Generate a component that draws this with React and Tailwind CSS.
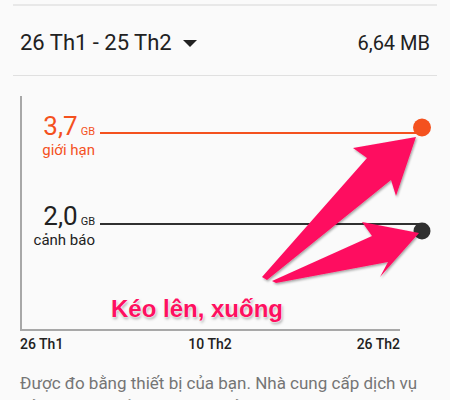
import React from 'react';

const ROBOTO = { fontFamily: 'Roboto, "Noto Sans", sans-serif' };

const Arrows = () => (
  <svg
    className="absolute inset-0 pointer-events-none"
    width="450"
    height="400"
    viewBox="0 0 450 400"
  >
    <defs>
      <filter id="shadow" x="-20%" y="-20%" width="140%" height="140%">
        <feDropShadow dx="1" dy="1.5" stdDeviation="1" floodColor="#000" floodOpacity="0.35" />
      </filter>
    </defs>

    {/* limit line + handle */}
    <line x1="100" y1="133" x2="422" y2="133" stroke="#f4511e" strokeWidth="2" />
    <circle cx="422" cy="127.5" r="9" fill="#f4511e" />

    {/* warning line + handle */}
    <line x1="100" y1="224" x2="420" y2="224" stroke="#303030" strokeWidth="2" />
    <circle cx="422" cy="231" r="8.5" fill="#303030" />

    {/* pink callout arrows */}
    <g fill="#fe1060" filter="url(#shadow)">
      <polygon points="262,277 367,158 353,148 416,137 396,196 391,180 267,280" />
      <polygon points="272,281 372,236 362,222 419,233 380,277 388,262 276,283" />
    </g>
  </svg>
);

export default function App() {
  return (
    <div className="relative w-[450px] h-[400px] overflow-hidden bg-[#fafafa]" style={ROBOTO}>
      <div className="mx-[13px] mt-[4px] h-[2px] bg-[#e8e8e8]" />

      {/* Period + usage */}
      <div className="flex items-center justify-between h-[69px] pt-[4px] pl-[20px] pr-[20px]">
        <div className="flex items-center text-[22px] leading-[26px] text-[#212121]">
          <span>26 Th1 - 25 Th2</span>
          <span className="ml-[11px] mt-[1px] w-0 h-0 border-l-[7.5px] border-r-[7.5px] border-t-[7px] border-l-transparent border-r-transparent border-t-[#212121]" />
        </div>
        <span className="text-[20px] leading-[24px] text-[#212121]">6,64 MB</span>
      </div>

      <div className="mx-[13px] h-px bg-[#e0e0e0]" />

      {/* Chart axes */}
      <div className="ml-[20px] mt-[20px] w-[380px] h-[235px] border-l-2 border-b-2 border-[#a8a8a8]" />
      <div className="ml-[20px] mt-[5px] w-[380px] flex justify-between text-[14px] leading-[16px] font-medium text-[#212121]">
        <span>26 Th1</span>
        <span>10 Th2</span>
        <span>26 Th2</span>
      </div>

      <p className="mt-[19px] px-[20px] text-[17px] leading-[24px] text-[#757575]">
        Được đo bằng thiết bị của bạn. Nhà cung cấp dịch vụ của bạn có thể tính dữ liệu của bạn khác.
      </p>

      <Arrows />

      {/* Limit label */}
      <div className="absolute top-[113px] right-[355px] flex flex-col items-end text-[#f4511e]">
        <div className="flex items-baseline">
          <span className="text-[26px] leading-[26px]">3,7</span>
          <span className="ml-[3px] text-[11px] leading-[12px]">GB</span>
        </div>
        <span className="mt-[2px] text-[15px] leading-[18px]">giới hạn</span>
      </div>

      {/* Warning label */}
      <div className="absolute top-[203px] right-[355px] flex flex-col items-end text-[#212121]">
        <div className="flex items-baseline">
          <span className="text-[26px] leading-[26px]">2,0</span>
          <span className="ml-[3px] text-[11px] leading-[12px]">GB</span>
        </div>
        <span className="mt-[2px] text-[15px] leading-[18px]">cảnh báo</span>
      </div>

      {/* Callout */}
      <div
        className="absolute top-[297px] left-[111px] text-[24px] leading-[24px] font-bold text-[#fe1060] [text-shadow:0_0_2px_#fff,0_0_2px_#fff,1px_2px_3px_rgba(0,0,0,0.35)]"
        style={{ fontFamily: '"Liberation Sans", Arial, sans-serif' }}
      >
        Kéo lên, xuống
      </div>
    </div>
  );
}
